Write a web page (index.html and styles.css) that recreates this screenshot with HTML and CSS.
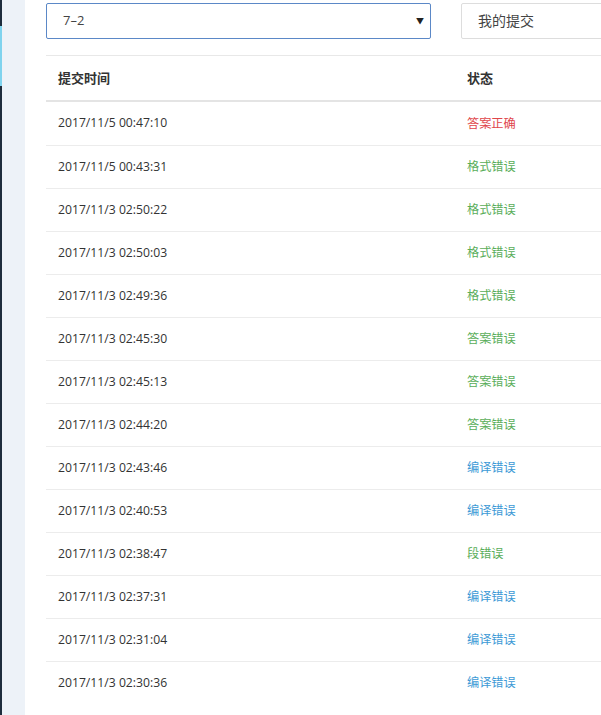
FILE: index.html
```html
<!DOCTYPE html>
<html>
<head>
<meta charset="utf-8">
<link rel="stylesheet" href="styles.css">
</head>
<body>
<div class="frame">
  <div class="rail"><div class="rail-active"></div></div>
  <div class="panel"></div>
  <div class="main">
    <div class="toolbar">
      <div class="select"><span>7–2</span><span class="caret">▼</span></div>
      <div class="filter">我的提交</div>
    </div>
    <table class="table">
      <thead>
        <tr><th class="c1">提交时间</th><th class="c2">状态</th></tr>
      </thead>
      <tbody>
        <tr><td>2017/11/5 00:47:10</td><td class="red">答案正确</td></tr>
        <tr><td>2017/11/5 00:43:31</td><td class="green">格式错误</td></tr>
        <tr><td>2017/11/3 02:50:22</td><td class="green">格式错误</td></tr>
        <tr><td>2017/11/3 02:50:03</td><td class="green">格式错误</td></tr>
        <tr><td>2017/11/3 02:49:36</td><td class="green">格式错误</td></tr>
        <tr><td>2017/11/3 02:45:30</td><td class="green">答案错误</td></tr>
        <tr><td>2017/11/3 02:45:13</td><td class="green">答案错误</td></tr>
        <tr><td>2017/11/3 02:44:20</td><td class="green">答案错误</td></tr>
        <tr><td>2017/11/3 02:43:46</td><td class="blue">编译错误</td></tr>
        <tr><td>2017/11/3 02:40:53</td><td class="blue">编译错误</td></tr>
        <tr><td>2017/11/3 02:38:47</td><td class="green">段错误</td></tr>
        <tr><td>2017/11/3 02:37:31</td><td class="blue">编译错误</td></tr>
        <tr><td>2017/11/3 02:31:04</td><td class="blue">编译错误</td></tr>
        <tr><td>2017/11/3 02:30:36</td><td class="blue">编译错误</td></tr>
      </tbody>
    </table>
  </div>
</div>
</body>
</html>
```
FILE: styles.css
```css
html, body {
  margin: 0;
  padding: 0;
  background: #fff;
  overflow: hidden;
  height: 715px;
}
.frame {
  display: flex;
  height: 715px;
  font-family: "Open Sans", "Noto Sans CJK SC", sans-serif;
  color: #333;
}
.rail {
  width: 2px;
  background: #1e2d3d;
  flex: none;
  padding-top: 26px;
  box-sizing: border-box;
}
.rail-active {
  height: 60px;
  background: #7fd3ee;
}
.panel {
  width: 23px;
  background: #edf2f8;
  flex: none;
}
.main {
  flex: 1;
  padding: 3px 0 0 21px;
  min-width: 0;
  overflow: hidden;
}
.toolbar {
  display: flex;
  gap: 30px;
  height: 36px;
}
.select {
  width: 385px;
  flex: none;
  box-sizing: border-box;
  border: 1px solid #5b88c7;
  border-radius: 2px;
  display: flex;
  align-items: center;
  justify-content: space-between;
  padding: 0 6px 2px 16px;
  font-size: 13px;
  color: #444;
}
.caret {
  font-size: 8px;
  color: #222;
}
.filter {
  width: 200px;
  flex: none;
  box-sizing: border-box;
  border: 1px solid #ddd;
  border-radius: 2px;
  display: flex;
  align-items: center;
  padding: 0 0 2px 16px;
  font-size: 14px;
  color: #444;
}
.table {
  margin-top: 16px;
  width: 700px;
  border-collapse: collapse;
  border-top: 1px solid #e8e8e8;
  font-size: 12.2px;
}
.table th {
  text-align: left;
  font-weight: bold;
  font-size: 13px;
  height: 42px;
  padding: 0 12px 2px;
  border-bottom: 2px solid #e4e4e4;
  color: #333;
}
.table th.c1 { width: 385px; }
.table td {
  height: 40px;
  padding: 0 12px 2px;
  border-top: 1px solid #ececec;
  color: #333;
}
.table tbody tr:first-child td { border-top: none; height: 41px; }
.table td.red { color: #e0454a; }
.table td.green { color: #5aae5a; }
.table td.blue { color: #3d9ad6; }
```
